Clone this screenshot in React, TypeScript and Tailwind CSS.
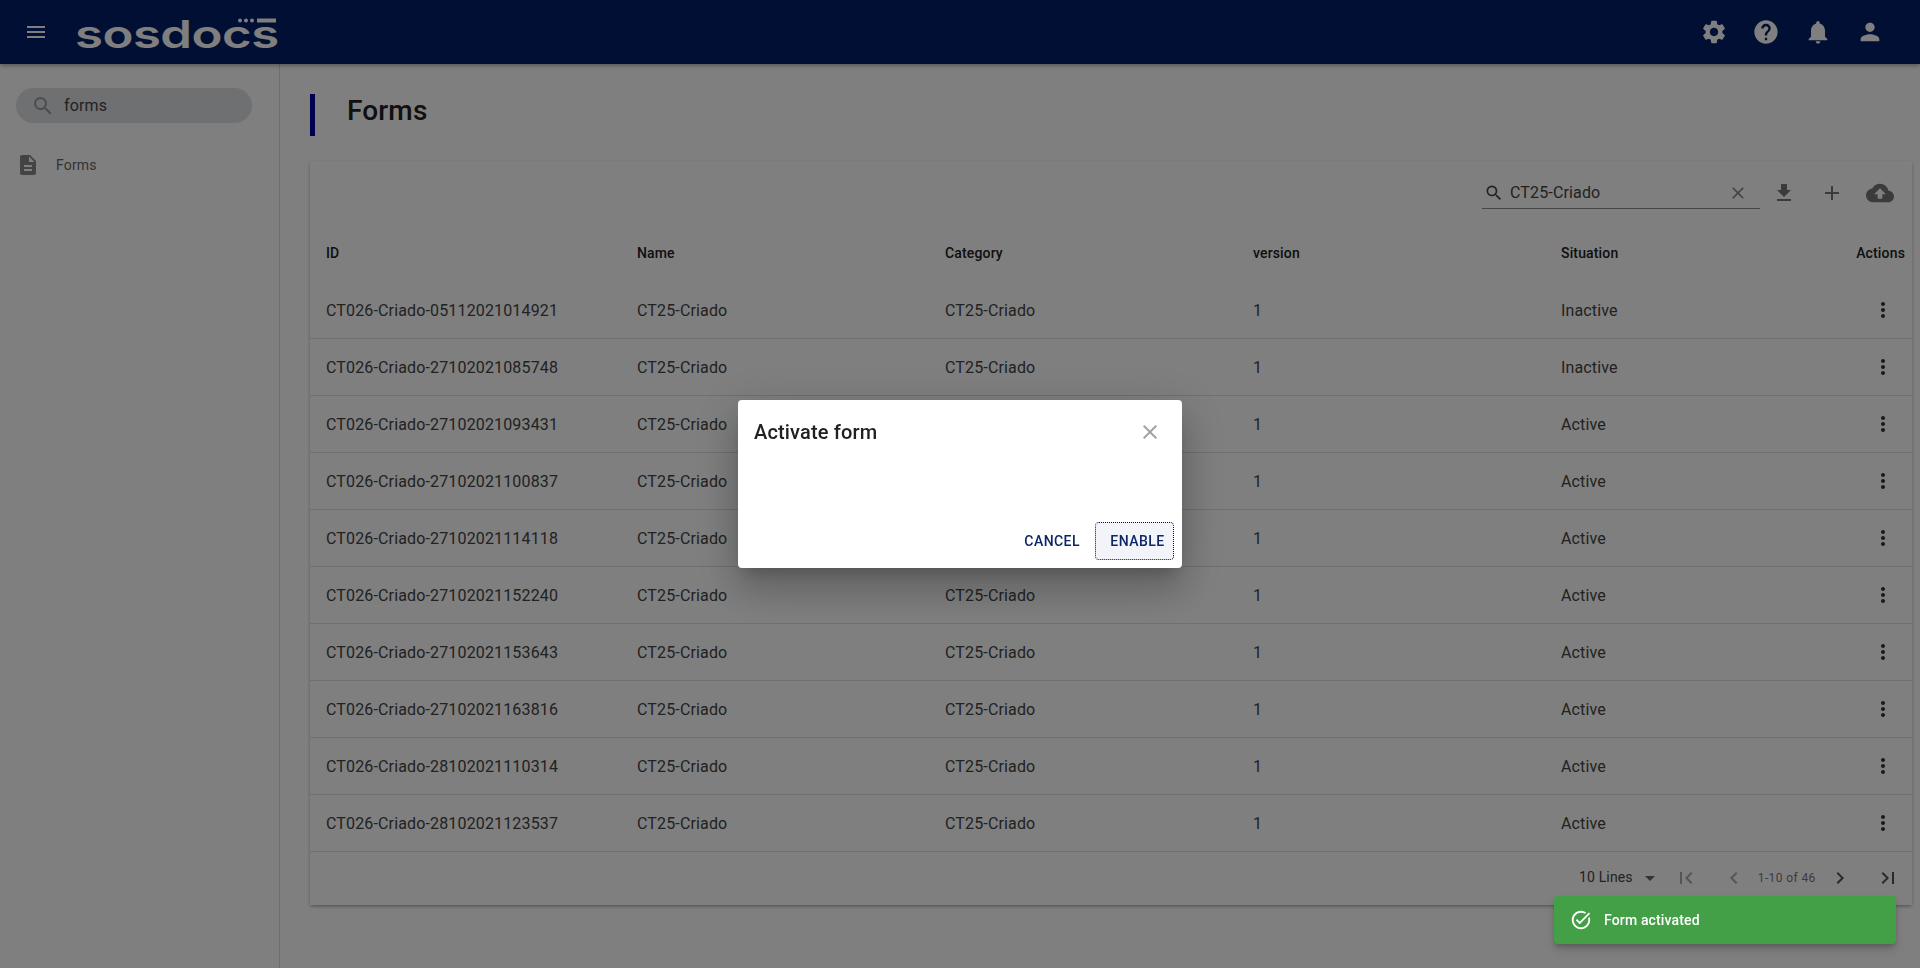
import {
  MdAdd,
  MdArrowDropDown,
  MdChevronLeft,
  MdChevronRight,
  MdClose,
  MdCloudUpload,
  MdDescription,
  MdFileDownload,
  MdFirstPage,
  MdHelp,
  MdLastPage,
  MdMenu,
  MdMoreVert,
  MdNotifications,
  MdPerson,
  MdSearch,
  MdSettings,
  MdTaskAlt,
} from 'react-icons/md';

const forms = [
  { id: 'CT026-Criado-05112021014921', situation: 'Inactive' },
  { id: 'CT026-Criado-27102021085748', situation: 'Inactive' },
  { id: 'CT026-Criado-27102021093431', situation: 'Active' },
  { id: 'CT026-Criado-27102021100837', situation: 'Active' },
  { id: 'CT026-Criado-27102021114118', situation: 'Active' },
  { id: 'CT026-Criado-27102021152240', situation: 'Active' },
  { id: 'CT026-Criado-27102021153643', situation: 'Active' },
  { id: 'CT026-Criado-27102021163816', situation: 'Active' },
  { id: 'CT026-Criado-28102021110314', situation: 'Active' },
  { id: 'CT026-Criado-28102021123537', situation: 'Active' },
];

const columns = 'grid grid-cols-[311px_308px_308px_308px_1fr] items-center pl-4';

function Logo() {
  return (
    <div className="relative ml-[29px] h-[40px] w-[200px]">
      <span className="absolute left-[-2px] top-[2px] origin-left scale-x-[1.34] font-['Inter',sans-serif] text-[38px] leading-[40px] font-semibold tracking-[-0.4px] text-white">
        sosdocs
      </span>
      <svg className="absolute left-[161px] top-[6px]" width="38" height="5" viewBox="0 0 38 5" fill="#fff">
        <circle cx="2" cy="2.5" r="2" />
        <circle cx="8" cy="2.5" r="2" />
        <circle cx="14" cy="2.5" r="2" />
        <rect x="19" y="0.5" width="19" height="4" />
      </svg>
    </div>
  );
}

function Header() {
  return (
    <header className="relative z-10 flex h-16 shrink-0 items-center bg-[#001e66] pl-[24px] pr-[36px] shadow-[0_2px_4px_rgba(0,0,0,0.3)]">
      <MdMenu className="text-white" size={24} />
      <Logo />
      <div className="ml-auto flex items-center gap-[24px] text-white">
        <MdSettings size={28} />
        <MdHelp size={28} />
        <MdNotifications size={28} />
        <MdPerson size={28} />
      </div>
    </header>
  );
}

function Sidebar() {
  return (
    <aside className="w-[280px] shrink-0 border-r border-[#dcdcdc] bg-white px-4 pt-6">
      <div className="flex h-[35px] w-[236px] items-center rounded-full bg-[#dee0e4] pl-[15px] text-[16px] text-[#444]">
        <MdSearch size={24} className="text-[#999]" />
        <span className="ml-[9px]">forms</span>
      </div>
      <div className="mt-[30px] flex items-center pl-[1px] text-[14px] text-[#666]">
        <MdDescription size={24} className="ml-[-1px] text-[#888]" />
        <span className="ml-[16px]">Forms</span>
      </div>
    </aside>
  );
}

function FormsTable() {
  return (
    <div className="mt-[25px] h-[744px] w-[1602px] bg-white shadow-[0_2px_4px_-1px_rgba(0,0,0,0.3),0_1px_3px_rgba(0,0,0,0.12)]">
      <div className="flex h-16 items-center justify-end pr-[18px]">
        <div className="flex h-[31px] w-[278px] items-center border-b border-[#8c8c8c] pl-[2px] pr-[12px] text-[16px] text-[#444]">
          <MdSearch size={20} className="text-[#444]" />
          <span className="ml-[6px]">CT25-Criado</span>
          <MdClose size={20} className="ml-auto text-[#888]" />
        </div>
        <MdFileDownload size={24} className="ml-[12px] text-[#777]" />
        <MdAdd size={24} className="ml-[24px] text-[#777]" />
        <MdCloudUpload size={28} className="ml-[22px] text-[#777]" />
      </div>
      <div className={`${columns} h-[57px] text-[14px] font-medium text-[#212121]`}>
        <span>ID</span>
        <span>Name</span>
        <span>Category</span>
        <span>version</span>
        <div className="flex items-center justify-between pr-[7px]">
          <span>Situation</span>
          <span>Actions</span>
        </div>
      </div>
      {forms.map((form) => (
        <div key={form.id} className={`${columns} h-[57px] border-b border-[#e0e0e0] pt-[1px] text-[16px] text-[#444]`}>
          <span>{form.id}</span>
          <span>CT25-Criado</span>
          <span>CT25-Criado</span>
          <span>1</span>
          <div className="flex items-center justify-between pr-[17px]">
            <span>{form.situation}</span>
            <MdMoreVert size={24} className="mt-[-1px] text-[#333]" />
          </div>
        </div>
      ))}
      <div className="flex h-[52px] items-center pl-[1269px] text-[#777]">
        <span className="mt-[-2px] text-[14px] text-[#444]">10 Lines</span>
        <MdArrowDropDown size={24} className="ml-[5px] text-[#666]" />
        <MdFirstPage size={24} className="ml-[12px] text-[#aaa]" />
        <MdChevronLeft size={24} className="ml-[24px] text-[#aaa]" />
        <span className="ml-[12px] text-[12px] tracking-[0.4px]">1-10 of 46</span>
        <MdChevronRight size={24} className="ml-[12px] text-[#555]" />
        <MdLastPage size={24} className="ml-[24px] text-[#555]" />
      </div>
    </div>
  );
}

function ActivateDialog() {
  return (
    <div className="fixed inset-0 z-20 flex items-center justify-center bg-black/50">
      <div className="flex h-[168px] w-[444px] flex-col rounded bg-white shadow-[0_11px_15px_-7px_rgba(0,0,0,0.2),0_24px_38px_3px_rgba(0,0,0,0.14),0_9px_46px_8px_rgba(0,0,0,0.12)]">
        <div className="flex h-[64px] items-center justify-between pl-4 pr-[20px]">
          <h2 className="text-[20px] leading-[32px] font-medium text-[#212121]">Activate form</h2>
          <MdClose size={24} className="text-[#a3a3a3]" />
        </div>
        <div className="mt-auto flex items-center justify-end pb-2 pr-2 text-[14px] font-medium tracking-[0.45px] text-[#0d2668]">
          <button className="mr-[-1px] h-[38px] px-4">CANCEL</button>
          <button className="h-[38px] w-[79px] rounded border border-dotted border-[#00104a] bg-[#f2f4fa] pl-[6px]">ENABLE</button>
        </div>
      </div>
    </div>
  );
}

function Snackbar() {
  return (
    <div className="fixed bottom-[24px] right-[24px] z-30 flex h-[48px] w-[342px] items-center rounded bg-[#43a047] pl-[16px] text-[14px] font-medium text-white shadow-[0_3px_5px_-1px_rgba(0,0,0,0.2),0_6px_10px_0_rgba(0,0,0,0.14)]">
      <MdTaskAlt size={22} />
      <span className="ml-[12px]">Form activated</span>
    </div>
  );
}

export default function App() {
  return (
    <div className="flex h-[968px] flex-col overflow-hidden bg-white font-['Roboto',sans-serif] tracking-[0.15px]">
      <Header />
      <div className="flex flex-1">
        <Sidebar />
        <main className="flex-1 pl-[30px] pt-[30px]">
          <div className="flex h-[42px] items-center border-l-[5px] border-[#0000a0] pb-[8px] pl-[32px] text-[28px] font-medium text-[#212121]">
            Forms
          </div>
          <FormsTable />
        </main>
      </div>
      <ActivateDialog />
      <Snackbar />
    </div>
  );
}
